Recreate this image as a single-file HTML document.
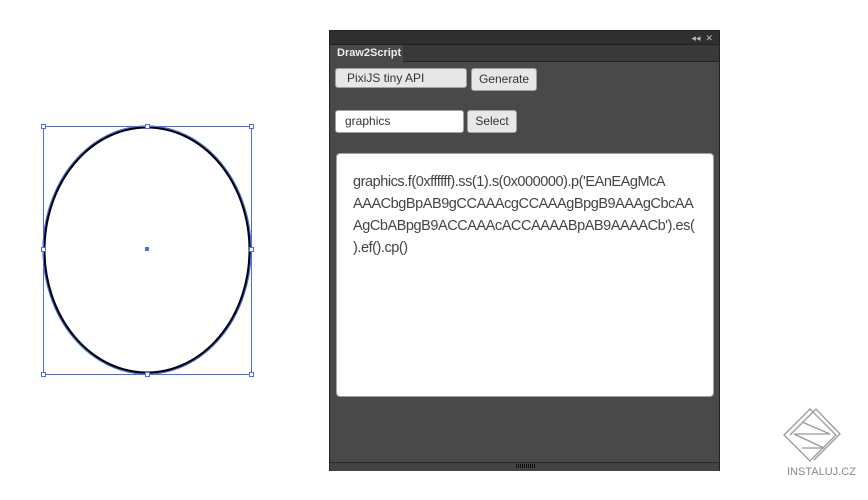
<!DOCTYPE html><html><head><style>
body{margin:0;width:868px;height:500px;background:#fff;position:relative;overflow:hidden;font-family:"Liberation Sans",sans-serif}
.a{position:absolute;box-sizing:border-box}
.btn{background:#e6e8e6;border:1px solid #9aa39c;border-radius:3px;font-size:12px;color:#333;line-height:18px}
</style></head><body>
<svg class="a" style="left:0;top:0" width="300" height="400">
<ellipse cx="147" cy="250" rx="103" ry="123" fill="none" stroke="#000" stroke-width="3"/>
<ellipse cx="147" cy="250" rx="104" ry="124" fill="none" stroke="#4a6cf5" stroke-width="1"/>
<rect x="43.5" y="126.5" width="208" height="248" fill="none" stroke="#4a6cf5"/>
<g fill="#fff" stroke="#4a6cf5">
<rect x="41.5" y="124.5" width="4" height="4"/><rect x="145.5" y="124.5" width="4" height="4"/><rect x="249.5" y="124.5" width="4" height="4"/>
<rect x="41.5" y="247.5" width="4" height="4"/><rect x="249.5" y="247.5" width="4" height="4"/>
<rect x="41.5" y="372.5" width="4" height="4"/><rect x="145.5" y="372.5" width="4" height="4"/><rect x="249.5" y="372.5" width="4" height="4"/>
</g>
<rect x="145" y="247" width="4" height="4" fill="#4a6cf5"/>
</svg>
<div class="a" style="left:329px;top:30px;width:391px;height:441px;background:#494949;border:1px solid #222">
<div class="a" style="left:0;top:0;width:389px;height:14px;background:#2f2f2f;border-bottom:1px solid #1e1e1e;color:#bbb;font-size:9px;text-align:right;padding-right:6px;line-height:14px">◂◂ &nbsp;✕</div>
<div class="a" style="left:0;top:14px;width:389px;height:17px;background:#393939;border-bottom:1px solid #222"></div>
<div class="a" style="left:0;top:14px;width:73px;height:18px;background:#494949;color:#eee;font-size:11px;font-weight:bold;padding-left:7px;line-height:17px">Draw2Script</div>
<div class="a btn" style="left:5px;top:37px;width:132px;height:20px;padding-left:11px">PixiJS tiny API</div>
<div class="a btn" style="left:141px;top:37px;width:66px;height:23px;text-align:center;line-height:21px">Generate</div>
<div class="a btn" style="left:5px;top:79px;width:129px;height:23px;background:#fff;padding-left:9px;line-height:21px">graphics</div>
<div class="a btn" style="left:137px;top:79px;width:50px;height:23px;text-align:center;line-height:21px">Select</div>
<div class="a" style="left:6px;top:122px;width:378px;height:244px;background:#fff;border:1px solid #9aa39c;border-radius:4px;padding:17px 0 0 16px;font-size:14.5px;line-height:22px;color:#444;white-space:nowrap;letter-spacing:-0.45px">graphics.f(0xffffff).ss(1).s(0x000000).p('EAnEAgMcA<br>AAACbgBpAB9gCCAAAcgCCAAAgBpgB9AAAgCbcAA<br>AgCbABpgB9ACCAAAcACCAAAABpAB9AAAACb').es(<br>).ef().cp()</div>
<div class="a" style="left:0;top:431px;width:389px;height:9px;background:#434343;border-top:1px solid #2a2a2a"></div>
<div class="a" style="left:186px;top:433px;width:19px;height:4px;background:repeating-linear-gradient(90deg,#111 0 1px,transparent 1px 2px)"></div>
</div>
<svg class="a" style="left:780px;top:404px" width="72" height="62" fill="none" stroke="#999" stroke-width="1.3">
<path d="M4 31 L30 5 L56 31 L30 57Z M10 31 L36 5 L60 30 L34 56"/>
<path d="M22 18 L50 30 L14 30 L44 44 L22 44"/>
</svg>
<div class="a" style="left:787px;top:466px;font-size:11px;color:#888">INSTALUJ.CZ</div>
</body></html>
